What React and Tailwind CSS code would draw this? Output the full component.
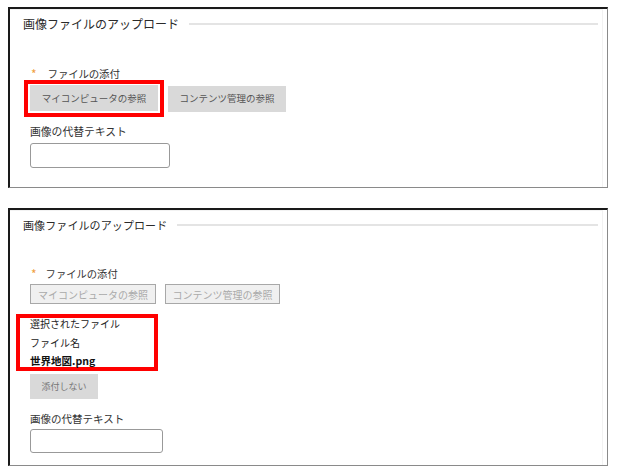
import React from "react";

const font = { fontFamily: '"Noto Sans CJK JP", "Noto Sans", sans-serif' };

function Title({ size }) {
  return (
    <div className="flex items-center h-[16px] pl-[13px] pr-[4px]">
      <span className={`${size} leading-[16px] text-[#2a2a2a] whitespace-nowrap`}>画像ファイルのアップロード</span>
      <div className="flex-1 ml-[10px] h-[2px] bg-[#e4e4e4]" />
    </div>
  );
}

function Label({ cls, gap }) {
  return (
    <div className="flex items-center h-[16px] pl-[21px]">
      <span className="text-[12px] leading-[16px] text-[#f0a040]">*</span>
      <span className={`${gap} ${cls} leading-[16px] text-[#333]`}>ファイルの添付</span>
    </div>
  );
}

export default function App() {
  return (
    <div className="bg-white w-[618px] h-[475px] pt-[7px] pl-[8px]" style={font}>
      {/* Panel 1 */}
      <div className="w-[600px] h-[181px] border-t-2 border-l-2 border-r border-b border-t-[#1a1a1a] border-l-[#1a1a1a] border-r-[#8a8a8a] border-b-[#8a8a8a]">
        <div className="h-full border-t border-r border-[#f2f2f2] pt-[6px] mr-[4px]">
          <Title size="text-[12px]" />
          <div className="mt-[34px]">
            <Label cls="text-[10.5px] tracking-[-0.2px]" gap="ml-[11px]" />
          </div>
          <div className="flex items-center ml-[14px] mt-[-2px]">
            <div className="border-[4px] border-[#ff0000] pt-[1px] pb-[2px] px-[2px]">
              <div className="w-[128px] h-[26px] bg-[#d9d9d9] flex items-center justify-center text-[9.5px] text-[#555] whitespace-nowrap">
                マイコンピュータの参照
              </div>
            </div>
            <div className="ml-[4px] w-[118px] h-[26px] bg-[#d9d9d9] flex items-center justify-center text-[9.5px] text-[#555] whitespace-nowrap">
              コンテンツ管理の参照
            </div>
          </div>
          <div className="ml-[20px] mt-[6px] text-[10.8px] leading-[16px] text-[#333]">画像の代替テキスト</div>
          <div className="ml-[20px] mt-[4px] w-[140px] h-[25px] rounded-[3px] border border-[#999] bg-white" />
        </div>
      </div>

      {/* Panel 2 */}
      <div className="mt-[20px] w-[600px] h-[258px] border-t-2 border-l-2 border-r border-b border-t-[#1a1a1a] border-l-[#1a1a1a] border-r-[#8a8a8a] border-b-[#8a8a8a]">
        <div className="h-full border-t border-r border-[#f2f2f2] pt-[6px] mr-[4px]">
          <Title size="text-[11px] tracking-[0.1px]" />
          <div className="mt-[33px]">
            <Label cls="text-[10.3px]" gap="ml-[9px]" />
          </div>
          <div className="flex items-center ml-[20px] mt-[2px]">
            <div className="w-[126px] h-[20px] bg-[#f0f0f0] border border-[#a8a8a8] flex items-center justify-center text-[10px] text-[#aaa] whitespace-nowrap">
              マイコンピュータの参照
            </div>
            <div className="ml-[9px] w-[115px] h-[20px] bg-[#f0f0f0] border border-[#a8a8a8] flex items-center justify-center text-[10px] text-[#aaa] whitespace-nowrap">
              コンテンツ管理の参照
            </div>
          </div>
          <div className="ml-[6px] mt-[10px] w-[142px] h-[57px] border-[4px] border-[#ff0000] pl-[10px] flex flex-col">
            <div className="h-[12px] text-[10px] leading-[12px] text-[#222] whitespace-nowrap">選択されたファイル</div>
            <div className="mt-[7px] h-[12px] text-[10px] leading-[12px] text-[#222] whitespace-nowrap">ファイル名</div>
            <div className="mt-[6px] h-[12px] text-[10.5px] leading-[12px] font-bold text-[#111] whitespace-nowrap">世界地図.png</div>
          </div>
          <div className="ml-[20px] mt-[3px] w-[68px] h-[25px] bg-[#d9d9d9] flex items-center justify-center text-[9px] text-[#777] whitespace-nowrap">
            添付しない
          </div>
          <div className="ml-[20px] mt-[12px] text-[10.5px] leading-[16px] text-[#333]">画像の代替テキスト</div>
          <div className="ml-[20px] mt-[2px] w-[133px] h-[24px] rounded-[3px] border border-[#999] bg-white" />
        </div>
      </div>
    </div>
  );
}
